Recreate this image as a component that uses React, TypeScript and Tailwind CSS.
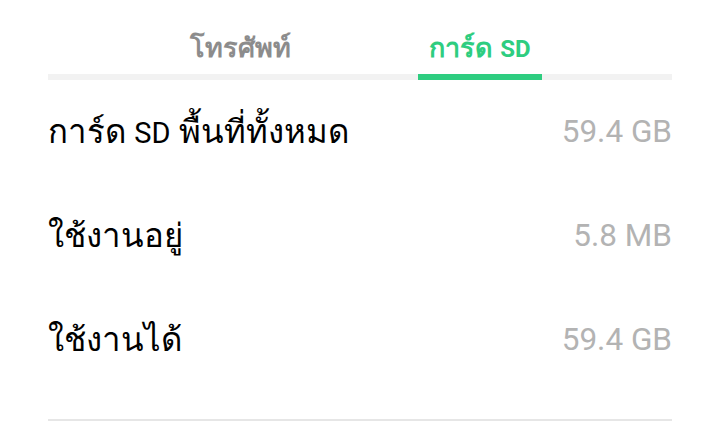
import React from 'react';

// Thai glyphs of the fallback font run narrow, so Latin parts get their own size
const rows = [
    { label: ['การ์ด ', 'SD', ' พื้นที่ทั้งหมด'], value: '59.4 GB' },
    { label: ['ใช้งานอยู่'], value: '5.8 MB' },
    { label: ['ใช้งานได้'], value: '59.4 GB' },
];

export default function App() {
    return (
        <div className="w-[720px] h-[422px] bg-white overflow-hidden px-12 font-['Roboto','Noto_Sans',sans-serif]">
            {/* Tabs */}
            <div className="h-[74px] flex justify-center pt-[31px]">
                <div className="w-[240px] flex justify-center">
                    <span className="h-[34px] text-[27px] leading-[34px] font-bold text-[#8c8c8c]">โทรศัพท์</span>
                </div>
                <div className="w-[240px] flex justify-center">
                    <span className="h-[34px] text-[27px] leading-[34px] font-bold text-[#2ecd80]">
                        การ์ด <span className="text-[24px]">SD</span>
                    </span>
                </div>
            </div>
            <div className="relative h-[6px] bg-[#f2f2f2]">
                <div className="absolute left-[370px] top-0 h-[6px] w-[124px] bg-[#2ecd80]" />
            </div>

            {/* Storage rows */}
            <div className="flex flex-col">
                {rows.map((row, i) => (
                    <div key={i} className="h-[104px] flex items-center justify-between">
                        <span className="text-[33px] leading-[40px] text-black">
                            {row.label.map((part, j) =>
                                part === 'SD' ? <span key={j} className="text-[29px]">{part}</span> : <span key={j}>{part}</span>
                            )}
                        </span>
                        <span className="text-[31.5px] leading-[40px] text-[#b3b3b3]">{row.value}</span>
                    </div>
                ))}
            </div>
            <div className="mt-[27px] h-[2px] bg-[#e6e6e6]" />
        </div>
    );
}
